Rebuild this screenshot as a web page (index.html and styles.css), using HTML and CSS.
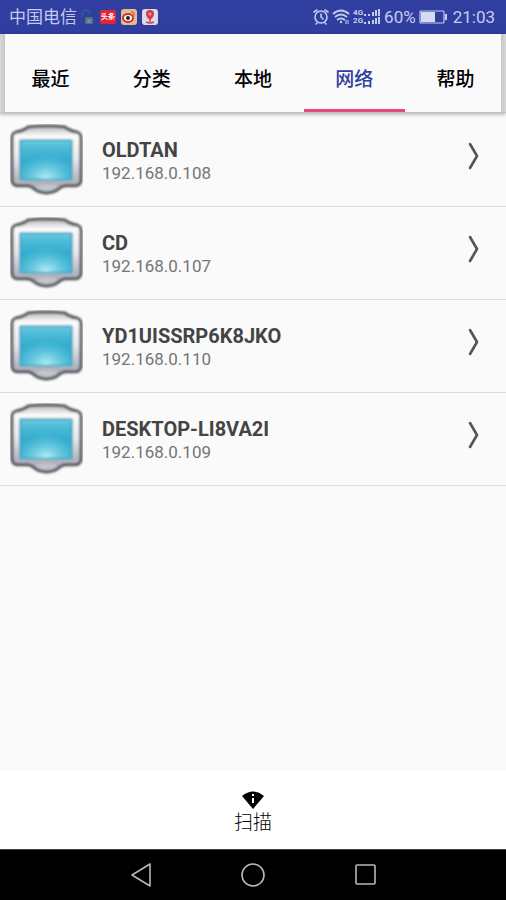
FILE: index.html
```html
<!DOCTYPE html>
<html lang="zh-CN">
<head>
    <meta charset="UTF-8">
    <meta name="viewport" content="width=device-width, initial-scale=1.0">
    <title>网络</title>
    <link rel="stylesheet" href="styles.css">
</head>
<body>
    <!-- Shared icons -->
    <svg class="sprite" aria-hidden="true">
        <defs>
            <linearGradient id="frame" x1="0" y1="0" x2="0" y2="1">
                <stop offset="0" stop-color="#b4b6b9"/>
                <stop offset="0.15" stop-color="#fbfbfc"/>
                <stop offset="0.5" stop-color="#e6e7ec"/>
                <stop offset="0.8" stop-color="#b4b7c0"/>
                <stop offset="1" stop-color="#a4a8ae"/>
            </linearGradient>
            <linearGradient id="glass" x1="0" y1="0" x2="0" y2="1">
                <stop offset="0" stop-color="#6ccbe2"/>
                <stop offset="0.2" stop-color="#4dbbd6"/>
                <stop offset="0.5" stop-color="#32acce"/>
                <stop offset="1" stop-color="#3cb0d0"/>
            </linearGradient>
            <radialGradient id="glow" cx="0.5" cy="0.95" r="0.6">
                <stop offset="0" stop-color="#b9f0f6" stop-opacity="0.95"/>
                <stop offset="1" stop-color="#6fd0e4" stop-opacity="0"/>
            </radialGradient>
            <filter id="soften">
                <feGaussianBlur stdDeviation="0.8"/>
            </filter>
        </defs>
        <symbol id="monitor" viewBox="0 0 72 72">
            <g filter="url(#soften)">
                <path d="M6 8 Q13 7 18 3 Q36 1 54 3 Q59 7 66 8 Q70 9 70 14 V56 Q69 61 64 61 H54 Q50 62 48 64 Q43 68 36 68 Q29 68 24 64 Q22 62 18 61 H8 Q3 61 2 56 V14 Q2 9 6 8 Z" fill="url(#frame)" stroke="#55585b" stroke-width="3"/>
                <path d="M25 61 Q36 58 47 61 Q44 66 36 66 Q28 66 25 61 Z" fill="#c3c5ca"/>
                <rect x="9" y="15" width="53" height="41" rx="2" fill="#b7bfd3"/>
                <rect x="10" y="16" width="51" height="39" rx="1" fill="url(#glass)"/>
                <rect x="10" y="16" width="51" height="39" rx="1" fill="url(#glow)"/>
                <rect x="10" y="16" width="51" height="39" rx="1" fill="none" stroke="#2e9dbd" stroke-width="2" stroke-opacity="0.6"/>
            </g>
        </symbol>
        <symbol id="chevron" viewBox="0 0 12 28">
            <path d="M2 2 L9 14 L2 26" fill="none" stroke="#555" stroke-width="2.6" stroke-linecap="round" stroke-linejoin="round"/>
        </symbol>
    </svg>

    <div class="screen">
        <div class="status-bar">
            <span class="carrier">中国电信</span>
            <div class="notices">
                <svg width="16" height="18" viewBox="0 0 16 18">
                    <path d="M3 10 V6 Q3 2 7 2 Q11 2 11 7" fill="none" stroke="#2a5795" stroke-width="2"/>
                    <path d="M2 15 Q0 12 3 9" fill="none" stroke="#245092" stroke-width="2"/>
                    <rect x="6" y="9" width="8" height="7" rx="1" fill="#536d83"/>
                    <path d="M8 12 H12 M8 14 H12" stroke="#9ca9a6"/>
                </svg>
                <span class="news-badge">头条</span>
                <svg width="16" height="16" viewBox="0 0 16 16">
                    <rect width="16" height="16" rx="3" fill="#e3bd91"/>
                    <ellipse cx="7" cy="9" rx="6" ry="5" fill="#c83532"/>
                    <ellipse cx="7" cy="9" rx="4" ry="3" fill="#fff"/>
                    <circle cx="7" cy="9" r="2" fill="#222"/>
                    <path d="M10 3 Q14 3 13 7" fill="none" stroke="#d9762b" stroke-width="1.5"/>
                </svg>
                <svg width="16" height="16" viewBox="0 0 16 16">
                    <rect width="16" height="16" rx="3" fill="#dcd9ec"/>
                    <path d="M8 11 Q4 8 4 5 A4 4 0 0 1 12 5 Q12 8 8 11 Z" fill="#d93748"/>
                    <circle cx="8" cy="5" r="1.6" fill="#ef9da5"/>
                    <path d="M8 10 V13 M4 13 Q8 15 12 13" fill="none" stroke="#d93748" stroke-width="1.5"/>
                </svg>
            </div>
            <div class="indicators">
                <svg width="16" height="18" viewBox="0 0 16 18" fill="none" stroke="#c5cbf0" stroke-width="1.6" stroke-linecap="round">
                    <circle cx="8" cy="9" r="6"/>
                    <path d="M8 6 V9 L10 11 M1 4 L4 2 M15 4 L12 2 M4 15 L3 16 M12 15 L13 16"/>
                </svg>
                <svg width="18" height="18" viewBox="0 0 18 18" fill="none" stroke="#c5cbf0" stroke-width="1.8">
                    <path d="M1 6 Q9 -1 17 6 M3 9 Q9 4 15 9 M5 12 Q9 9 13 12"/>
                    <circle cx="9" cy="14" r="1.2" fill="#c5cbf0" stroke="none"/>
                    <path d="M14 12 V16 M16 12 V16" stroke-width="1"/>
                </svg>
                <div class="signal">
                    <span class="signal-type">4G<br>2G</span>
                    <svg width="18" height="16" viewBox="0 0 18 16" stroke="#c5cbf0" stroke-width="2">
                        <path d="M2 5 V7 M6 5 V7 M10 3 V7 M13 1 V7 M16 0 V7 M2 13 V15 M6 12 V15 M10 11 V15 M13 9 V15 M16 8 V15"/>
                    </svg>
                </div>
                <span class="level">60%</span>
                <svg width="28" height="14" viewBox="0 0 28 14">
                    <rect x="1" y="1" width="24" height="12" rx="1" fill="none" stroke="#c5cbf0" stroke-width="1.2"/>
                    <rect x="2" y="2" width="14" height="10" fill="#d5d9f5"/>
                    <path d="M27 4 V10" stroke="#c5cbf0" stroke-width="2"/>
                </svg>
                <span class="clock">21:03</span>
            </div>
        </div>

        <nav class="tabs">
            <a href="#recent">最近</a>
            <a href="#category">分类</a>
            <a href="#local">本地</a>
            <a href="#network" class="active">网络</a>
            <a href="#help">帮助</a>
        </nav>

        <main class="devices">
            <a class="device" href="#oldtan">
                <svg class="device-icon"><use href="#monitor"/></svg>
                <div class="device-text">
                    <div class="device-name">OLDTAN</div>
                    <div class="device-ip">192.168.0.108</div>
                </div>
                <svg class="chevron"><use href="#chevron"/></svg>
            </a>
            <a class="device" href="#cd">
                <svg class="device-icon"><use href="#monitor"/></svg>
                <div class="device-text">
                    <div class="device-name">CD</div>
                    <div class="device-ip">192.168.0.107</div>
                </div>
                <svg class="chevron"><use href="#chevron"/></svg>
            </a>
            <a class="device" href="#yd1uissrp6k8jko">
                <svg class="device-icon"><use href="#monitor"/></svg>
                <div class="device-text">
                    <div class="device-name">YD1UISSRP6K8JKO</div>
                    <div class="device-ip">192.168.0.110</div>
                </div>
                <svg class="chevron"><use href="#chevron"/></svg>
            </a>
            <a class="device" href="#desktop-li8va2i">
                <svg class="device-icon"><use href="#monitor"/></svg>
                <div class="device-text">
                    <div class="device-name">DESKTOP-LI8VA2I</div>
                    <div class="device-ip">192.168.0.109</div>
                </div>
                <svg class="chevron"><use href="#chevron"/></svg>
            </a>
        </main>

        <button class="scan-button" type="button">
            <svg width="24" height="20" viewBox="0 0 24 20">
                <path d="M1 6 Q12 -3 23 6 L12 19 Z" fill="#000"/>
                <path d="M12 4 V6 M12 8 V13" stroke="#fff" stroke-width="2"/>
            </svg>
            <span>扫描</span>
        </button>

        <div class="system-nav">
            <button type="button" aria-label="返回">
                <svg width="26" height="26" viewBox="0 0 26 26"><path d="M4 13 L22 2 V24 Z"/></svg>
            </button>
            <button type="button" aria-label="主页">
                <svg width="26" height="26" viewBox="0 0 26 26"><circle cx="13" cy="13" r="11"/></svg>
            </button>
            <button type="button" aria-label="最近任务">
                <svg width="26" height="26" viewBox="0 0 26 26"><rect x="4" y="3" width="19" height="19" rx="1"/></svg>
            </button>
        </div>
    </div>
</body>
</html>
```
FILE: styles.css
```css
:root {
    --primary-color: #303f9f;
    --accent-color: #e8487f;
    --background-color: #fafafa;
    --status-text: #c5cbf0;
}

* {
    box-sizing: border-box;
}

body {
    margin: 0;
    font-family: Roboto, "Noto Sans CJK SC", sans-serif;
    background: var(--background-color);
    color: #000;
}

a {
    color: inherit;
    text-decoration: none;
}

button {
    border: none;
    padding: 0;
    font-family: inherit;
    color: inherit;
    cursor: pointer;
}

svg {
    display: block;
    flex: none;
}

.sprite {
    position: absolute;
    width: 0;
    height: 0;
}

.screen {
    display: flex;
    flex-direction: column;
    min-height: 100vh;
}

/* Status bar */
.status-bar {
    display: flex;
    align-items: center;
    height: 34px;
    padding: 0 11px 0 9px;
    background: var(--primary-color);
    color: var(--status-text);
    font-size: 17px;
    line-height: 34px;
}

.notices {
    display: flex;
    align-items: center;
    gap: 5px;
    margin-left: 2px;
}

.news-badge {
    width: 16px;
    height: 14px;
    border-radius: 2px;
    background: #df2637;
    color: #fff;
    font-size: 7px;
    font-weight: 700;
    line-height: 14px;
    text-align: center;
}

.indicators {
    display: flex;
    align-items: center;
    gap: 3px;
    margin-left: auto;
}

.signal {
    display: flex;
    align-items: center;
}

.signal-type {
    font-size: 8px;
    font-weight: 700;
    line-height: 8px;
}

.clock {
    margin-left: 3px;
}

/* Tabs */
.tabs {
    display: flex;
    height: 79px;
    border-bottom: 1px solid #c4c4c4;
    background: linear-gradient(90deg, #d8d8d8, #c6c6c6 5px, var(--background-color) 5px, var(--background-color) calc(100% - 5px), #c6c6c6 calc(100% - 5px), #d8d8d8);
    box-shadow: 0 1px 4px rgba(0, 0, 0, 0.35);
}

.tabs a {
    flex: 1;
    padding-top: 15px;
    border-bottom: 3px solid transparent;
    font-size: 19px;
    font-weight: 500;
    line-height: 62px;
    text-align: center;
}

.tabs .active {
    border-color: var(--accent-color);
    color: var(--primary-color);
}

/* Device list */
.devices {
    flex: 1;
    padding-top: 1px;
}

.device {
    display: flex;
    align-items: center;
    height: 93px;
    padding: 0 26px 0 10px;
    border-bottom: 1px solid #dedede;
}

.device-icon {
    width: 73px;
    height: 73px;
}

.device-text {
    flex: 1;
    margin-left: 19px;
    padding-top: 2px;
}

.device-name {
    color: #444;
    font-size: 20px;
    font-weight: 700;
    line-height: 24px;
}

.device-ip {
    color: #757575;
    font-size: 17px;
    line-height: 22px;
}

.chevron {
    width: 12px;
    height: 28px;
    margin-bottom: 8px;
}

/* Bottom bars */
.scan-button {
    display: flex;
    flex-direction: column;
    align-items: center;
    justify-content: center;
    height: 78px;
    padding-top: 6px;
    background: #fff;
    font-size: 19px;
    font-weight: 300;
    line-height: 26px;
}

.system-nav {
    display: flex;
    justify-content: center;
    gap: 86px;
    height: 51px;
    border-top: 1px solid #444;
    background: #000;
}

.system-nav button {
    background: none;
}

.system-nav svg {
    fill: none;
    stroke: #b8b8b8;
    stroke-width: 1.6;
    stroke-linejoin: round;
}
```
